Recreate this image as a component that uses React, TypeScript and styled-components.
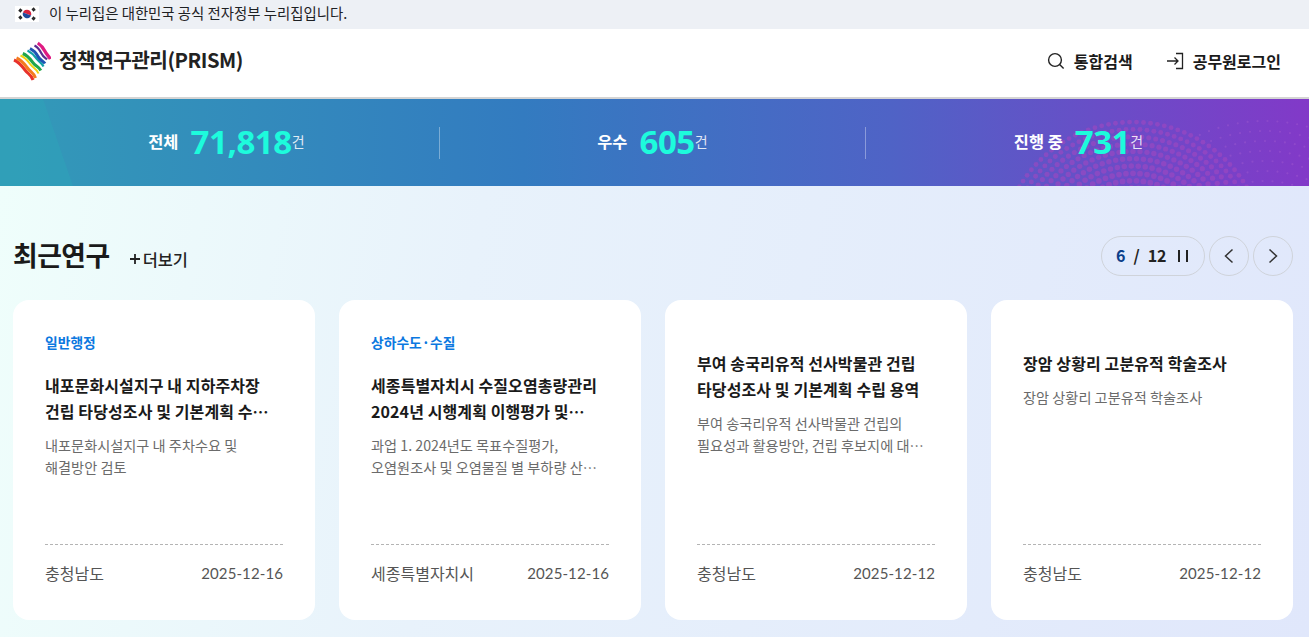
import styled, { createGlobalStyle } from 'styled-components';
import { ReactNode } from 'react';

const GlobalStyle = createGlobalStyle`
  html, body {
    margin: 0;
    padding: 0;
    overflow: hidden;
  }
  body {
    font-family: "Noto Sans CJK KR", "Noto Sans", sans-serif;
    color: #1a1a1a;
  }
  * {
    box-sizing: border-box;
  }
`;

const Page = styled.div`
  width: 1309px;
  height: 637px;
  overflow: hidden;
  display: flex;
  flex-direction: column;
`;

const GovBar = styled.div`
  height: 29px;
  flex: none;
  display: flex;
  align-items: center;
  gap: 10px;
  padding: 0 0 2px 15px;
  background: #edf0f5;
  font-size: 14.4px;
  color: #1e2124;
`;

const GovText = styled.span`
  margin-top: -2px;
`;

const Header = styled.header`
  height: 70px;
  flex: none;
  display: flex;
  align-items: center;
  justify-content: space-between;
  padding: 0 28px 5px 13px;
  background: #fff;
  border-bottom: 2px solid #d4d4d4;
`;

const Brand = styled.div`
  display: flex;
  align-items: center;
  gap: 8px;
  font-size: 20.2px;
  font-weight: 700;
  letter-spacing: -0.5px;
  color: #222;
`;

const BrandName = styled.span`
  margin-top: -2px;
`;

const BrandMark = styled.svg`
  margin-top: 2px;
`;

const HeaderNav = styled.nav`
  display: flex;
  align-items: center;
  gap: 33px;
`;

const NavLink = styled.a`
  display: flex;
  align-items: center;
  gap: 9px;
  font-size: 16px;
  font-weight: 700;
  color: #1a1a1a;
`;

const Banner = styled.section`
  position: relative;
  height: 87px;
  flex: none;
  display: flex;
  align-items: center;
  overflow: hidden;
  padding: 0 18px 0 14px;
  background: linear-gradient(90deg, #339ab8 0%, #337bc0 40%, #4f63c6 68%, #8239c8 100%);
`;

const BannerArt = styled.svg`
  position: absolute;
  left: 0;
  top: 0;
  width: 1309px;
  height: 87px;
`;

const Stat = styled.div<{ $divided?: boolean }>`
  position: relative;
  flex: 1;
  height: 32px;
  display: flex;
  align-items: center;
  justify-content: center;
  padding-bottom: 3px;
  border-left: ${(p) => (p.$divided ? '1px solid rgba(255, 255, 255, 0.35)' : 'none')};
`;

const StatLabel = styled.span`
  font-size: 16.4px;
  font-weight: 700;
  color: #fff;
  margin-right: 12px;
`;

const StatValue = styled.strong`
  font-family: "Noto Sans", sans-serif;
  font-size: 33px;
  font-weight: 700;
  line-height: 1;
  letter-spacing: -0.4px;
  color: #1dfbdc;
`;

const StatUnit = styled.span`
  font-size: 14px;
  color: rgba(255, 255, 255, 0.85);
`;

const Main = styled.main`
  flex: 1;
  padding: 50px 16px 0 13px;
  background: linear-gradient(100deg, #effefb 0%, #e8f2fb 35%, #e0e7fb 100%);
`;

const SectionHead = styled.div`
  height: 40px;
  display: flex;
  align-items: center;
  justify-content: space-between;
  margin-bottom: 24px;
`;

const HeadLeft = styled.div`
  display: flex;
  align-items: center;
  gap: 18px;
`;

const SectionTitle = styled.h2`
  margin: -4px 0 0;
  font-size: 26.8px;
  font-weight: 700;
  letter-spacing: -0.5px;
  color: #1a1a1a;
`;

const MoreLink = styled.a`
  display: flex;
  align-items: center;
  gap: 1px;
  font-size: 16.4px;
  font-weight: 500;
  color: #222;
  margin-top: 6px;
`;

const Controls = styled.div`
  display: flex;
  align-items: center;
  gap: 4px;
`;

const Pager = styled.div`
  width: 104px;
  height: 40px;
  display: flex;
  align-items: center;
  gap: 8px;
  padding: 0 0 2px 14px;
  border: 1px solid #cfd3da;
  border-radius: 20px;
  font-size: 16px;
  font-weight: 700;
  color: #222;
`;

const PagerCurrent = styled.span`
  color: #0b3f8a;
`;

const PauseIcon = styled.svg`
  margin-left: 2px;
  margin-top: 2px;
`;

const RoundButton = styled.button`
  width: 40px;
  height: 40px;
  padding: 0;
  display: flex;
  align-items: center;
  justify-content: center;
  background: transparent;
  border: 1px solid #cfd3da;
  border-radius: 50%;
`;

const CardGrid = styled.div`
  display: grid;
  grid-template-columns: repeat(4, 302px);
  gap: 24px;
`;

const Card = styled.article`
  height: 320px;
  display: flex;
  flex-direction: column;
  padding: 32px 32px 0;
  background: #fff;
  border-radius: 16px;
`;

const Category = styled.div<{ $empty?: boolean }>`
  height: ${(p) => (p.$empty ? '0' : '20px')};
  margin-bottom: ${(p) => (p.$empty ? '18px' : '20px')};
  font-size: 13.8px;
  line-height: 20px;
  font-weight: 700;
  color: #0b78e0;
`;

const CardTitle = styled.h3`
  margin: 0 0 10px;
  font-size: 16px;
  line-height: 26px;
  font-weight: 700;
  letter-spacing: 0.1px;
  word-break: keep-all;
  color: #1a1a1a;
  display: -webkit-box;
  -webkit-box-orient: vertical;
  -webkit-line-clamp: 2;
  overflow: hidden;
`;

const CardText = styled.p`
  margin: 0;
  font-size: 14.2px;
  line-height: 22px;
  word-break: keep-all;
  color: #6b6b6b;
  display: -webkit-box;
  -webkit-box-orient: vertical;
  -webkit-line-clamp: 2;
  overflow: hidden;
`;

const CardFoot = styled.div`
  margin-top: auto;
  height: 76px;
  display: flex;
  align-items: center;
  justify-content: space-between;
  padding-bottom: 19px;
  border-top: 1px dashed #b4b4b4;
  font-size: 16px;
  color: #555;
`;

const CardDate = styled.span`
  font-family: "Lato", sans-serif;
  font-size: 15px;
  letter-spacing: 0.1px;
  margin-bottom: 1px;
`;

const Flag = () => (
  <svg width="24" height="16" viewBox="0 0 24 16">
    <rect width="24" height="16" fill="#fff" />
    <path d="M7.7 8a4.3 4.3 0 0 1 8.6 0z" fill="#d8233f" transform="rotate(20 12 8)" />
    <path d="M7.7 8a4.3 4.3 0 0 0 8.6 0z" fill="#1f4a9c" transform="rotate(20 12 8)" />
    <g stroke="#222" strokeWidth="1.4">
      <path d="M3.800 5.300l2-2.600M5 6.200l2-2.600" />
      <path d="M17 2.700l2 2.600M18.200 1.800l2 2.600" />
      <path d="M3.800 10.700l2 2.600M5 9.800l2 2.600" />
      <path d="M17 13.300l2-2.600M18.200 14.200l2-2.600" />
    </g>
  </svg>
);

const Logo = () => (
  <BrandMark width="38" height="41" viewBox="5 5 38 41" fill="none" strokeWidth="3">
    <path d="M6 24c5 2 8 6 11 10s6 4 8 10" stroke="#e8322b" />
    <path d="M8.500 22c5 2 8 6 11 10s6 4 8 10" stroke="#f47b20" />
    <path d="M12.500 19.500c5 2 7 5 10 9s6 4 8 9" stroke="#f3d40f" strokeWidth="2" />
    <path d="M14.800 17.500c5 2 7 5 10 9s6 4 8 8" stroke="#21a64a" />
    <path d="M19.500 14.500c4 2 6 4 9 8s5 4 7 8" stroke="#10a0a8" strokeWidth="2.200" />
    <path d="M22 12.500c4 2 6 4 8 8s5 4 7 7" stroke="#1f55b4" />
    <path d="M26.500 9.500c4 2 5 4 7 8s4 4 5.500 6" stroke="#5b2d90" strokeWidth="2.200" />
    <path d="M29.800 7c3 2 5 4 7 8s4 5 5.500 8" stroke="#df1b82" strokeWidth="3.200" />
  </BrandMark>
);

// halftone dots at the right end of the banner
const dots: ReactNode[] = [];
const inBanner = (y: number) => y > -3 && y < 90;
for (let ring = 9; ring <= 18; ring++) {
  const radius = ring * 7.33;
  const n = Math.round((Math.PI * 2 * radius) / 7);
  for (let i = 0; i < n; i++) {
    const a = (i / n) * Math.PI * 2;
    const x = 1133 + Math.cos(a) * radius;
    const y = 155 + Math.sin(a) * radius;
    if (!inBanner(y)) continue;
    dots.push(<circle key={`a${ring}-${i}`} cx={x} cy={y} r={3.5 - ring * 0.06} fill="#a048c0" opacity="0.6" />);
  }
}
for (let ring = 10; ring <= 16; ring++) {
  const radius = ring * 10;
  const n = Math.round((Math.PI * 2 * radius) / 10);
  for (let i = 0; i < n; i++) {
    const a = (i / n) * Math.PI * 2;
    const x = 1265 + Math.cos(a) * radius;
    const y = 182 + Math.sin(a) * radius;
    if (!inBanner(y) || Math.hypot(x - 1133, y - 155) < 136) continue;
    dots.push(<circle key={`b${ring}-${i}`} cx={x} cy={y} r="1.1" fill="#a860d0" opacity="0.35" />);
  }
}

type Study = { category?: string; title: string; text: string; region: string; date: string };

const studies: Study[] = [
  {
    category: '일반행정',
    title: '내포문화시설지구 내 지하주차장 건립 타당성조사 및 기본계획 수립 용역',
    text: '내포문화시설지구 내 주차수요 및 해결방안 검토',
    region: '충청남도',
    date: '2025-12-16',
  },
  {
    category: '상하수도·수질',
    title: '세종특별자치시 수질오염총량관리 2024년 시행계획 이행평가 및 2025년 계획',
    text: '과업 1. 2024년도 목표수질평가, 오염원조사 및 오염물질 별 부하량 산정 및 평가',
    region: '세종특별자치시',
    date: '2025-12-16',
  },
  {
    title: '부여 송국리유적 선사박물관 건립 타당성조사 및 기본계획 수립 용역',
    text: '부여 송국리유적 선사박물관 건립의 필요성과 활용방안, 건립 후보지에 대한 검토 및 기본계획',
    region: '충청남도',
    date: '2025-12-12',
  },
  {
    title: '장암 상황리 고분유적 학술조사',
    text: '장암 상황리 고분유적 학술조사',
    region: '충청남도',
    date: '2025-12-12',
  },
];

export default function App() {
  return (
    <Page>
      <GlobalStyle />
      <GovBar>
        <Flag />
        <GovText>이 누리집은 대한민국 공식 전자정부 누리집입니다.</GovText>
      </GovBar>
      <Header>
        <Brand>
          <Logo />
          <BrandName>정책연구관리(PRISM)</BrandName>
        </Brand>
        <HeaderNav>
          <NavLink>
            <svg width="18" height="18" viewBox="0 0 18 18" fill="none" stroke="#222" strokeWidth="1.4">
              <circle cx="8" cy="8" r="6.4" />
              <path d="M12.6 12.6L16.6 16.6" />
            </svg>
            통합검색
          </NavLink>
          <NavLink>
            <svg width="18" height="18" viewBox="0 0 18 18" fill="none" stroke="#222" strokeWidth="1.3">
              <path d="M1 9h11M8.500 5.500L12 9l-3.500 3.500" />
              <path d="M10 1.500h6.500v15H10" />
            </svg>
            공무원로그인
          </NavLink>
        </HeaderNav>
      </Header>
      <Banner>
        <BannerArt viewBox="0 0 1309 87">
          <path d="M0 0H43L73 87H0z" fill="#2ea8b8" opacity="0.4" />
          {dots}
        </BannerArt>
        <Stat>
          <StatLabel>전체</StatLabel>
          <StatValue>71,818</StatValue>
          <StatUnit>건</StatUnit>
        </Stat>
        <Stat $divided>
          <StatLabel>우수</StatLabel>
          <StatValue>605</StatValue>
          <StatUnit>건</StatUnit>
        </Stat>
        <Stat $divided>
          <StatLabel>진행 중</StatLabel>
          <StatValue>731</StatValue>
          <StatUnit>건</StatUnit>
        </Stat>
      </Banner>
      <Main>
        <SectionHead>
          <HeadLeft>
            <SectionTitle>최근연구</SectionTitle>
            <MoreLink>
              <svg width="14" height="14" viewBox="0 0 14 14" stroke="#222" strokeWidth="1.8">
                <path d="M7 2v10M2 7h10" />
              </svg>
              더보기
            </MoreLink>
          </HeadLeft>
          <Controls>
            <Pager>
              <PagerCurrent>6</PagerCurrent>
              <span>/</span>
              <span>12</span>
              <PauseIcon width="12" height="12" viewBox="0 0 12 12" stroke="#222" strokeWidth="2">
                <path d="M2 0v12M10 0v12" />
              </PauseIcon>
            </Pager>
            <RoundButton aria-label="이전">
              <svg width="12" height="16" viewBox="0 0 12 16" fill="none" stroke="#333" strokeWidth="1.5">
                <path d="M9.500 1.500L2.500 8l7 6.500" />
              </svg>
            </RoundButton>
            <RoundButton aria-label="다음">
              <svg width="12" height="16" viewBox="0 0 12 16" fill="none" stroke="#333" strokeWidth="1.5">
                <path d="M2.500 1.500L9.500 8l-7 6.500" />
              </svg>
            </RoundButton>
          </Controls>
        </SectionHead>
        <CardGrid>
          {studies.map((s) => (
            <Card key={s.title}>
              <Category $empty={!s.category}>{s.category}</Category>
              <CardTitle>{s.title}</CardTitle>
              <CardText>{s.text}</CardText>
              <CardFoot>
                <span>{s.region}</span>
                <CardDate>{s.date}</CardDate>
              </CardFoot>
            </Card>
          ))}
        </CardGrid>
      </Main>
    </Page>
  );
}
